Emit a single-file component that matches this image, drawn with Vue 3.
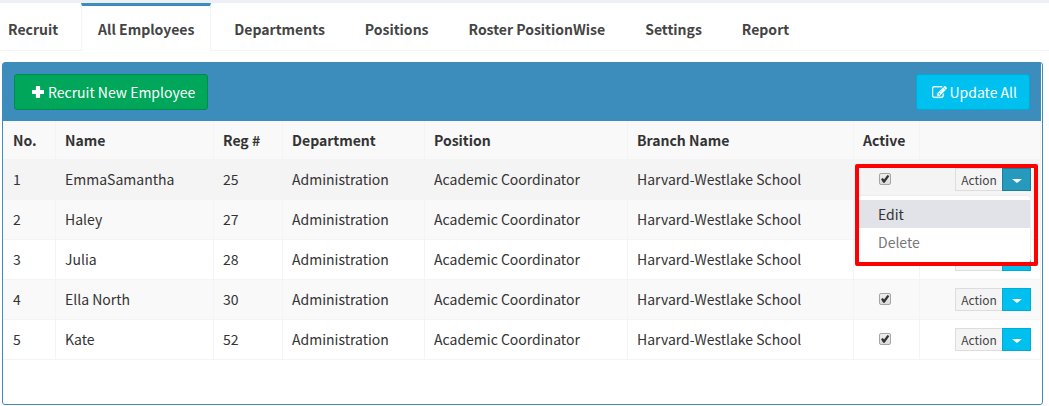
<script setup>
import { ref } from 'vue'

const tabs = ['Recruit', 'All Employees', 'Departments', 'Positions', 'Roster PositionWise', 'Settings', 'Report']
const activeTab = ref('All Employees')
const openRow = ref(1)

const employees = ref([
  { no: 1, name: 'EmmaSamantha', reg: 25, active: true },
  { no: 2, name: 'Haley', reg: 27, active: true },
  { no: 3, name: 'Julia', reg: 28, active: true },
  { no: 4, name: 'Ella North', reg: 30, active: true },
  { no: 5, name: 'Kate', reg: 52, active: true }
])

function toggle(no) {
  openRow.value = openRow.value === no ? 0 : no
}
</script>

<template>
  <div class="page">
    <nav class="tabs">
      <a
        v-for="tab in tabs"
        :key="tab"
        href="#"
        class="tab"
        :class="{ current: tab === activeTab }"
        @click.prevent="activeTab = tab"
      >{{ tab }}</a>
    </nav>

    <section class="panel">
      <header class="panel-head">
        <button type="button" class="btn btn-green">
          <svg class="icon-plus" viewBox="0 0 12 12" aria-hidden="true">
            <path d="M4.5 0h3a.6.6 0 0 1 .6.6v3.3h3.3a.6.6 0 0 1 .6.6v3a.6.6 0 0 1-.6.6H8.100v3.300a.6.6 0 0 1-.6.6h-3a.6.6 0 0 1-.6-.6V8.100H.6a.6.6 0 0 1-.6-.6v-3a.6.6 0 0 1 .6-.6h3.300V.6a.6.6 0 0 1 .6-.6z" />
          </svg>
          Recruit New Employee
        </button>
        <button type="button" class="btn btn-aqua">
          <svg class="icon-edit" viewBox="0 0 1792 1536" aria-hidden="true">
            <path d="M888 1056l116-116-152-152-116 116v56h96v96h56zm440-720q-16-16-33 1l-350 350q-17 17-1 33t33-1l350-350q17-17 1-33zm80 594v190q0 119-84.500 203.500T1120 1408H288q-119 0-203.500-84.500T0 1120V288Q0 169 84.500 84.500T288 0h832q63 0 117 25 15 7 18 23 3 17-9 29l-49 49q-14 14-32 8-23-6-45-6H288q-66 0-113 47t-47 113v832q0 66 47 113t113 47h832q66 0 113-47t47-113V994q0-13 9-22l64-64q15-15 35-7t20 29zm-96-738l288 288-672 672H640V864zm444 132l-92 92-288-288 92-92q28-28 68-28t68 28l152 152q28 28 28 68t-28 68z" />
          </svg>
          Update All
        </button>
      </header>

      <table class="grid">
        <colgroup>
          <col class="c-no"><col class="c-name"><col class="c-reg"><col class="c-dept">
          <col class="c-pos"><col class="c-branch"><col class="c-active"><col class="c-action">
        </colgroup>
        <thead>
          <tr>
            <th scope="col">No.</th>
            <th scope="col">Name</th>
            <th scope="col">Reg #</th>
            <th scope="col">Department</th>
            <th scope="col">Position</th>
            <th scope="col">Branch Name</th>
            <th scope="col">Active</th>
            <td></td>
          </tr>
        </thead>
        <tbody>
          <tr v-for="e in employees" :key="e.no" :class="{ hovered: e.no === openRow }">
            <td>{{ e.no }}</td>
            <td>{{ e.name }}</td>
            <td>{{ e.reg }}</td>
            <td>Administration</td>
            <td>Academic Coordinator</td>
            <td>Harvard-Westlake School</td>
            <td class="check-cell">
              <label class="check">
                <input v-model="e.active" type="checkbox" :aria-label="'Active: ' + e.name">
                <svg v-if="e.active" viewBox="0 0 12 12" aria-hidden="true">
                  <path d="M2 6.300L3.800 5L5.100 6.500L8.400 2L10.400 3.100L5.700 9.800H4.200Z" />
                </svg>
              </label>
            </td>
            <td class="action-cell">
              <div class="split">
                <button type="button" class="act">Action</button>
                <button
                  type="button"
                  class="caret"
                  :class="{ open: e.no === openRow }"
                  :aria-label="'Actions for ' + e.name"
                  :aria-expanded="e.no === openRow"
                  @click="toggle(e.no)"
                ><span class="triangle"></span></button>
                <div v-if="e.no === openRow" class="menu">
                  <a href="#" class="item selected" @click.prevent>Edit</a>
                  <a href="#" class="item" @click.prevent>Delete</a>
                </div>
                <div v-if="e.no === openRow" class="marker"></div>
              </div>
            </td>
          </tr>
        </tbody>
      </table>
    </section>
  </div>
</template>

<style>
body {
  background: #fff;
}
</style>

<style scoped>
.page {
  border-top: 3px solid #ecf0f5;
  font-family: "Noto Sans CJK SC", "Open Sans", sans-serif;
  font-size: 14px;
  line-height: 20px;
  color: #333;
}
.tabs {
  display: flex;
  gap: 6px;
  height: 47px;
  border-bottom: 1px solid #f4f4f4;
}
.tab {
  box-sizing: border-box;
  height: 48px;
  padding: 13px 16px 0;
  border: 0 solid transparent;
  border-top: 3px solid transparent;
  border-left-width: 1px;
  border-right-width: 1px;
  font-weight: 700;
  color: #444;
  text-decoration: none;
  white-space: nowrap;
}
.tab:first-child {
  padding-left: 7px;
}
.tab.current {
  background: #fff;
  border-color: #3c8dbc #f4f4f4 transparent;
}
.panel {
  margin: 11px 6px 0 2px;
  padding-bottom: 44px;
  border: 1px solid #3c8dbc;
  border-radius: 3px;
}
.panel-head {
  display: flex;
  justify-content: space-between;
  align-items: center;
  height: 58px;
  margin-right: 1px;
  padding: 0 11px;
  background: #3c8dbc;
}
.btn {
  display: flex;
  align-items: center;
  height: 36px;
  border: 1px solid;
  border-radius: 3px;
  font: inherit;
  color: #fff;
  white-space: nowrap;
}
.btn-green {
  gap: 4px;
  padding: 0 12px 0 17px;
  background: #00a65a;
  border-color: #008d4c;
}
.btn-aqua {
  gap: 2px;
  padding: 0 12px 0 15px;
  background: #00c0ef;
  border-color: #00acd6;
}
.icon-plus {
  width: 12px;
  height: 12px;
  fill: #fff;
}
.icon-edit {
  width: 15px;
  height: 13px;
  fill: #fff;
  stroke: #fff;
  stroke-width: 40;
}
.grid {
  width: calc(100% - 1px);
  table-layout: fixed;
  border-collapse: separate;
  border-spacing: 0;
}
.c-no { width: 53px; }
.c-name { width: 158px; }
.c-reg { width: 69px; }
.c-dept { width: 142px; }
.c-pos { width: 203px; }
.c-active { width: 66px; }
.c-action { width: 121px; }
.grid th,
.grid td {
  box-sizing: border-box;
  height: 40px;
  padding: 0 9px;
  border-right: 1px solid #f4f4f4;
  border-bottom: 1px solid #f4f4f4;
  text-align: left;
  font-weight: 400;
  white-space: nowrap;
}
.grid th {
  font-weight: 700;
}
.grid thead th,
.grid thead td {
  height: 39px;
}
.grid tbody td {
  padding-bottom: 2px;
}
.grid th:first-child,
.grid td:first-child {
  padding-left: 10px;
}
.grid thead tr,
.grid tbody tr:nth-child(even) {
  background: #f9f9f9;
}
.grid tbody tr.hovered {
  background: #f4f4f4;
}
.grid tbody td.check-cell {
  padding: 0 0 2px;
}
.grid tbody td.action-cell {
  padding-bottom: 0;
}
.check {
  display: grid;
  width: 12px;
  height: 12px;
  margin: 0 0 0 25px;
}
.check input,
.check svg {
  grid-area: 1 / 1;
  width: 12px;
  height: 12px;
}
.check input {
  appearance: none;
  box-sizing: border-box;
  margin: 0;
  border: 1px solid #a5a5a5;
  border-radius: 2px;
  background: linear-gradient(#eee, #dcdcdc);
}
.check svg {
  fill: #333;
  pointer-events: none;
}
.split {
  position: relative;
  display: flex;
  justify-content: flex-end;
  height: 23px;
}
.act,
.caret {
  box-sizing: border-box;
  height: 23px;
  margin: 0;
  padding: 0;
  border: 1px solid #ddd;
  font: inherit;
}
.act {
  width: 47px;
  border-right: 0;
  background: #f4f4f4;
  font-size: 12px;
  line-height: 20px;
  color: #444;
}
.caret {
  display: flex;
  align-items: center;
  justify-content: center;
  width: 29px;
  background: #00c0ef;
  border-color: #00acd6;
}
.caret.open {
  background: #269abc;
  border-color: #1b7e9c;
}
.triangle {
  margin-top: 3px;
  border: 5px solid transparent;
  border-top: 4px solid #fff;
  border-bottom: 0;
}
.menu {
  position: absolute;
  z-index: 1;
  top: 27px;
  right: 0;
  box-sizing: border-box;
  width: 174px;
  padding: 4px 0 6px;
  background: #fff;
  border: 1px solid #eee;
  border-radius: 4px;
}
.item {
  display: block;
  padding: 4px 20px;
  color: #777;
  text-decoration: none;
}
.item.selected {
  background: #e1e3e9;
  color: #333;
}
.marker {
  position: absolute;
  z-index: 2;
  top: -4px;
  right: -7px;
  box-sizing: border-box;
  width: 183px;
  height: 102px;
  border: 4px solid #f00;
  border-radius: 2px;
  pointer-events: none;
}
</style>
